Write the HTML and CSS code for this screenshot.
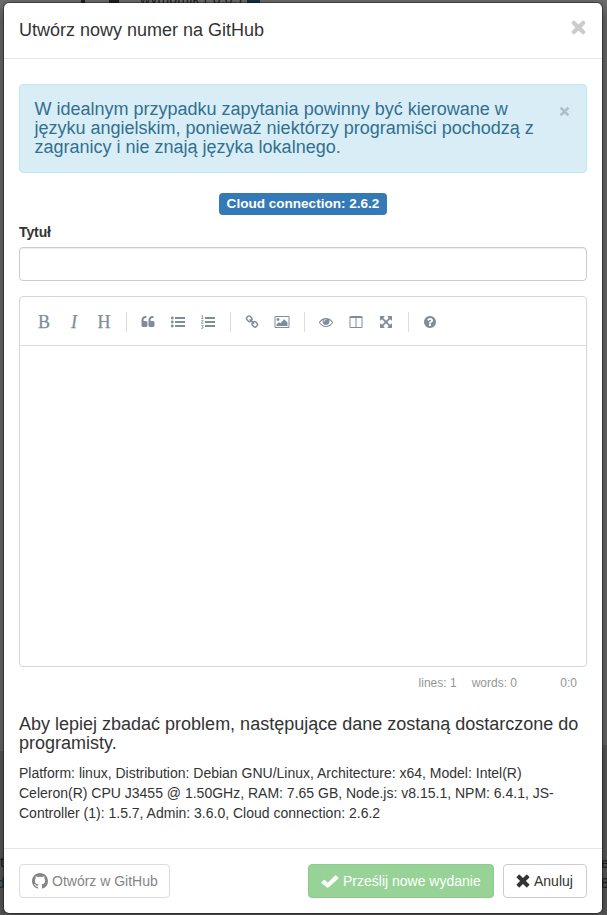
FILE: index.html
```
<!DOCTYPE html>
<html lang="pl">
<head>
<meta charset="utf-8">
<title>Utwórz nowy numer na GitHub</title>
<link rel="stylesheet" href="styles.css">
</head>
<body>
<div class="page-behind" aria-hidden="true">
  <span class="behind b-top">wymomik ( 0.0.7</span>
  <i class="behind mark m1"></i><i class="behind mark m2"></i><i class="behind mark m3"></i>
  <i class="behind band band-left"></i><i class="behind band band-right"></i>
  <span class="behind b-left">t</span><span class="behind b-left2">d</span>
  <span class="behind b-right">e</span><span class="behind b-right2">8</span>
</div>
<div class="modal">
  <header class="modal-header">
    <h4>Utwórz nowy numer na GitHub</h4>
    <button class="close" aria-label="Zamknij"><svg viewBox="0 0 14 14"><path d="M2.700 2.700l8.600 8.600M11.300 2.700l-8.600 8.600"/></svg></button>
  </header>
  <main class="modal-body">
    <div class="alert">
      <h4>W idealnym przypadku zapytania powinny być kierowane w języku angielskim, ponieważ niektórzy programiści pochodzą z zagranicy i nie znają języka lokalnego.</h4>
      <button class="close small" aria-label="Zamknij"><svg viewBox="0 0 14 14"><path d="M2 2l10 10M12 2l-10 10"/></svg></button>
    </div>
    <div class="adapter"><span class="label">Cloud connection: 2.6.2</span></div>
    <label class="title-label" for="title">Tytuł</label>
    <input class="title-input" id="title" type="text">
    <div class="editor">
      <div class="toolbar">
        <a class="letter">B</a><a class="letter italic">I</a><a class="letter">H</a><i class="sep"></i>
        <a><svg viewBox="0 0 1792 1792"><path d="M832 960v384q0 80-56 136t-136 56h-384q-80 0-136-56t-56-136v-704q0-104 40.5-198.5t109.5-163.5 163.5-109.5 198.5-40.5h64q26 0 45 19t19 45v128q0 26-19 45t-45 19h-64q-106 0-181 75t-75 181v32q0 40 28 68t68 28h224q80 0 136 56t56 136zm896 0v384q0 80-56 136t-136 56h-384q-80 0-136-56t-56-136v-704q0-104 40.5-198.5t109.5-163.5 163.5-109.5 198.5-40.5h64q26 0 45 19t19 45v128q0 26-19 45t-45 19h-64q-106 0-181 75t-75 181v32q0 40 28 68t68 28h224q80 0 136 56t56 136z"/></svg></a>
        <a><svg viewBox="0 0 14 14"><circle cx="1.3" cy="3" r="1.400"/><circle cx="1.3" cy="7" r="1.400"/><circle cx="1.3" cy="11" r="1.400"/><path d="M4 2h10v2H4zM4 6h10v2H4zM4 10h10v2H4z"/></svg></a>
        <a><svg viewBox="0 0 14 14"><path d="M4 2h10v2H4zM4 6h10v2H4zM4 10h10v2H4z"/><path class="thin" d="M.4 1l1-.6v3M.2 3.500h2.300M.3 5.600q2-1 1.900.3L.3 8.200h2.200M.2 10.300h2L1 11.700q1.600.1 1 1.300-.8.8-1.900.2"/></svg></a><i class="sep"></i>
        <a><svg viewBox="0 0 1792 1792"><path d="M1520 1216q0-40-28-68l-208-208q-28-28-68-28-42 0-72 32 3 3 19 18.500t21.500 21.500 15 19 13 25.500 3.500 27.500q0 40-28 68t-68 28q-15 0-27.500-3.500t-25.500-13-19-15-21.500-21.500-18.500-19q-33 31-33 73 0 40 28 68l206 207q27 27 68 27 40 0 68-26l147-146q28-28 28-67zm-703-705q0-40-28-68l-206-207q-28-28-68-28-39 0-68 27l-147 146q-28 28-28 67 0 40 28 68l208 208q27 27 68 27 42 0 72-31-3-3-19-18.500t-21.500-21.500-15-19-13-25.500-3.500-27.500q0-40 28-68t68-28q15 0 27.500 3.500t25.500 13 19 15 21.500 21.500 18.500 19q33-31 33-73zm895 705q0 120-85 203l-147 146q-83 83-203 83-121 0-204-85l-206-207q-83-83-83-203 0-123 88-209l-88-88q-86 88-208 88-120 0-204-84l-208-208q-84-84-84-204t85-203l147-146q83-83 203-83 121 0 204 85l206 207q83 83 83 203 0 123-88 209l88 88q86-88 208-88 120 0 204 84l208 208q84 84 84 204z"/></svg></a>
        <a><svg viewBox="0 0 1792 1792"><path d="M576 576q0 80-56 136t-136 56-136-56-56-136 56-136 136-56 136 56 56 136zm1024 384v448h-1408v-192l320-320 160 160 512-512zm96-704h-1600q-13 0-22.500 9.500t-9.500 22.500v1216q0 13 9.500 22.500t22.500 9.500h1600q13 0 22.500-9.500t9.500-22.500v-1216q0-13-9.500-22.500t-22.500-9.500zm160 32v1216q0 66-47 113t-113 47h-1600q-66 0-113-47t-47-113v-1216q0-66 47-113t113-47h1600q66 0 113 47t47 113z"/></svg></a><i class="sep"></i>
        <a><svg viewBox="0 0 1792 1792"><path d="M1664 960q-152-236-381-353 61 104 61 225 0 185-131.500 316.500t-316.500 131.500-316.500-131.500-131.500-316.500q0-121 61-225-229 117-381 353 133 205 333.500 326.500t434.500 121.500 434.500-121.500 333.500-326.500zm-720-384q0-20-14-34t-34-14q-125 0-214.500 89.500t-89.500 214.500q0 20 14 34t34 14 34-14 14-34q0-86 61-147t147-61q20 0 34-14t14-34zm848 384q0 34-20 69-140 230-376.500 368.500t-499.500 138.500-499.500-139-376.500-368q-20-35-20-69t20-69q140-229 376.500-368t499.500-139 499.500 139 376.500 368q20 35 20 69z"/></svg></a>
        <a><svg viewBox="0 0 1792 1792"><path d="M224 1536h608v-1152h-640v1120q0 13 9.500 22.500t22.500 9.500zm1376-32v-1120h-640v1152h608q13 0 22.500-9.500t9.500-22.500zm128-1216v1216q0 66-47 113t-113 47h-1344q-66 0-113-47t-47-113v-1216q0-66 47-113t113-47h1344q66 0 113 47t47 113z"/></svg></a>
        <a><svg viewBox="0 0 1792 1792"><path d="M1411 541l-355 355 355 355 144-144q29-31 70-14 39 17 39 59v448q0 26-19 45t-45 19h-448q-42 0-59-40-17-39 14-69l144-144-355-355-355 355 144 144q31 30 14 69-17 40-59 40h-448q-26 0-45-19t-19-45v-448q0-42 40-59 39-17 69 14l144 144 355-355-355-355-144 144q-19 19-45 19-12 0-24-5-40-17-40-59v-448q0-26 19-45t45-19h448q42 0 59 40 17 39-14 69l-144 144 355 355 355-355-144-144q-31-30-14-69 17-40 59-40h448q26 0 45 19t19 45v448q0 42-39 59-13 5-25 5-26 0-45-19z"/></svg></a><i class="sep"></i>
        <a><svg viewBox="0 0 1792 1792"><path d="M1024 1376v-192q0-14-9-23t-23-9h-192q-14 0-23 9t-9 23v192q0 14 9 23t23 9h192q14 0 23-9t9-23zm256-672q0-88-55.500-163t-138.500-116-170-41q-243 0-371 213-15 24 8 42l132 100q7 6 19 6 16 0 25-12 53-68 86-92 34-24 86-24 48 0 85.500 26t37.500 59q0 38-20 61t-68 45q-63 28-115.500 86.500t-52.500 125.500v36q0 14 9 23t23 9h192q14 0 23-9t9-23q0-19 21.500-49.500t54.500-49.500q32-18 49-28.500t46-35 44.500-48 28-60.500 12.500-81zm384 192q0 209-103 385.500t-279.500 279.500-385.500 103-385.500-103-279.500-279.500-103-385.500 103-385.500 279.500-279.500 385.500-103 385.500 103 279.500 279.500 103 385.500z"/></svg></a>
      </div>
      <div class="text-area"></div>
    </div>
    <div class="statusbar"><span>lines: 1</span><span>words: 0</span><span class="cursor">0:0</span></div>
    <h4 class="info-title">Aby lepiej zbadać problem, następujące dane zostaną dostarczone do programisty.</h4>
    <p class="info">Platform: linux, Distribution: Debian GNU/Linux, Architecture: x64, Model: Intel(R) Celeron(R) CPU J3455 @ 1.50GHz, RAM: 7.65 GB, Node.js: v8.15.1, NPM: 6.4.1, JS-Controller (1): 1.5.7, Admin: 3.6.0, Cloud connection: 2.6.2</p>
  </main>
  <footer class="modal-footer">
    <button class="btn github"><svg viewBox="0 0 16 16"><path d="M8 0C3.580 0 0 3.580 0 8c0 3.540 2.290 6.530 5.470 7.590.4.070.55-.17.55-.38 0-.19-.01-.82-.01-1.490-2.010.37-2.530-.49-2.690-.94-.09-.23-.48-.94-.82-1.130-.28-.15-.68-.52-.01-.53.63-.01 1.080.58 1.230.82.72 1.210 1.870.87 2.330.66.07-.52.28-.87.51-1.070-1.780-.2-3.640-.89-3.640-3.950 0-.87.31-1.590.82-2.150-.08-.2-.36-1.020.08-2.120 0 0 .67-.21 2.200.82.64-.18 1.320-.27 2-.27.68 0 1.360.09 2 .27 1.530-1.040 2.200-.82 2.200-.82.44 1.100.16 1.920.08 2.120.51.56.82 1.270.82 2.150 0 3.070-1.870 3.750-3.650 3.950.29.25.54.73.54 1.480 0 1.070-.01 1.930-.01 2.200 0 .21.15.46.55.38A8.013 8.013 0 0 0 16 8c0-4.420-3.580-8-8-8z"/></svg><span>Otwórz w GitHub</span></button>
    <button class="btn submit"><svg viewBox="0 0 18 14"><path d="M.6 8.200l2.200-2.200q.6-.6 1.200 0l2.800 2.800L14 1.600q.6-.6 1.200 0l2 2q.5.6 0 1.200L7.400 13.600q-.6.500-1.200 0L.6 9.300q-.5-.5 0-1.100z"/></svg><span>Prześlij nowe wydanie</span></button>
    <button class="btn cancel"><svg viewBox="0 0 14 14"><path d="M3.700.8L7 4.100 10.300.8q.5-.4.9 0l2 2q.4.4 0 .9L9.900 7l3.300 3.300q.4.5 0 .9l-2 2q-.4.4-.9 0L7 9.900l-3.300 3.300q-.5.4-.9 0l-2-2q-.4-.4 0-.9L4.100 7 .8 3.700q-.4-.5 0-.9l2-2q.4-.4.900 0z"/></svg><span>Anuluj</span></button>
  </footer>
</div>
</body>
</html>
```
FILE: styles.css
```
* { box-sizing: border-box; }
html, body { height: 100%; }
body {
  margin: 0;
  overflow: hidden;
  padding: 2px 0 0 3px;
  background: #6f6f6f;
  font: 14px/20px "Liberation Sans", Arial, sans-serif;
  color: #333;
}
h4 { margin: 0; font-size: 18px; line-height: 19px; font-weight: 400; }
button { font: inherit; color: inherit; }

.page-behind { position: absolute; inset: 0; overflow: hidden; color: #1c1c1c; }
.behind { position: absolute; }
.b-top { left: 140px; top: -9px; line-height: 16px; letter-spacing: .2px; }
.mark { background: #202020; height: 3px; top: 0; }
.m1 { left: 81px; width: 4px; }
.m2 { left: 109px; width: 10px; }
.m3 { left: 247px; width: 13px; background: #16323f; }
.band { background: #5f5f5f; width: 5px; }
.band-left { left: 0; top: 751px; bottom: 0; }
.band-right { right: 0; top: 745px; bottom: 0; }
.b-left { left: 0; top: 852px; }
.b-left2 { left: -3px; top: 873px; color: #16323f; }
.b-right { left: 601px; top: 853px; }
.b-right2 { left: 601px; top: 873px; }

.modal {
  position: relative;
  width: 600px;
  height: 912px;
  background: #fff;
  background-clip: padding-box;
  border: 1px solid rgba(0,0,0,.35);
  border-radius: 6px;
  box-shadow: 0 5px 15px rgba(0,0,0,.5);
}
.modal-header {
  display: flex;
  justify-content: space-between;
  height: 56px;
  padding: 17px 16px 0 15px;
  border-bottom: 1px solid #e5e5e5;
}
.modal-header h4 { padding-top: 1px; }
.close { display: block; width: 15px; height: 15px; padding: 0; border: 0; background: none; }
.close svg { display: block; width: 100%; fill: none; stroke: #ccc; stroke-width: 4; stroke-linecap: round; }
.close.small { width: 11px; height: 11px; margin: 6px 2px 0 0; flex: none; }
.close.small svg { stroke: #adbec5; stroke-width: 3.4; stroke-linecap: butt; }

.modal-body { padding: 25px 15px 0; height: 789px; }
.alert {
  display: flex;
  justify-content: space-between;
  height: 89px;
  padding: 15px 14px 15px 14.500px;
  border: 1px solid #bce8f1;
  border-radius: 4px;
  background: #d9edf7;
  color: #31708f;
}
.alert h4 { width: 506px; }
.adapter { display: flex; justify-content: center; margin-top: 20px; }
.label {
  height: 22px;
  padding: 0 8px;
  border-radius: 4px;
  background: #337ab7;
  color: #fff;
  font-size: 13.550px;
  font-weight: 700;
  line-height: 21px;
}
.title-label { display: block; margin: 7px 0 5px; font-weight: 700; letter-spacing: -.1px; }
.title-input {
  display: block;
  width: 100%;
  height: 34px;
  border: 1px solid #ccc;
  border-radius: 4px;
  background: #fff;
  box-shadow: inset 0 1px 1px rgba(0,0,0,.075);
}
.editor { margin-top: 15px; height: 371px; border: 1px solid #d4d6d7; border-radius: 4px; }
.toolbar { display: flex; align-items: center; height: 49px; padding: 1px 9px 0; border-bottom: 1px solid #ddd; }
.toolbar a { display: flex; align-items: center; justify-content: center; width: 30px; height: 30px; color: #7f8c9a; }
.toolbar svg { width: 14px; height: 14px; fill: currentColor; overflow: visible; }
.toolbar .thin { fill: none; stroke: currentColor; stroke-width: .8; }
.letter { font: 18px/30px "Liberation Serif", serif; -webkit-text-stroke: .25px currentColor; }
.italic { font-style: italic; }
.sep { width: 1px; height: 20px; margin: 0 6px 0 7px; background: #ddd; }
.statusbar { display: flex; justify-content: flex-end; margin-top: 6px; padding-right: 10px; font-size: 12px; color: #959694; }
.statusbar span { margin-left: 15px; }
.statusbar .cursor { min-width: 45px; text-align: right; }
.info-title { margin-top: 22px; }
.info { margin: 10px 0 0; }

.modal-footer { display: flex; height: 64px; padding: 15px; border-top: 1px solid #e5e5e5; }
.btn {
  display: flex;
  align-items: center;
  height: 34px;
  padding: 0 12px;
  border: 1px solid #ccc;
  border-radius: 4px;
  background: #fff;
  white-space: nowrap;
}
.btn svg { fill: currentColor; flex: none; }
.github { width: 151px; margin-right: auto; color: #858585; border-color: #ddd; }
.github svg { width: 16px; height: 16px; margin-right: 4px; }
.submit { width: 186px; border-color: #8ccb8c; background: #97d397; color: #fff; }
.submit svg { width: 18px; height: 14px; margin-right: 4px; }
.cancel { width: 84px; margin-left: 9px; }
.cancel svg { width: 14px; height: 14px; margin-right: 4px; }
```
